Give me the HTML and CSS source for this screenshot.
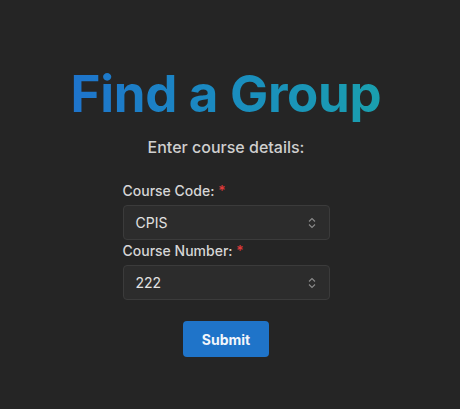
FILE: index.html
```html
<!DOCTYPE html>
<html>
<head>
<meta charset="utf-8">
<link rel="stylesheet" href="styles.css">
</head>
<body>
<main class="page">
  <h1 class="title">Find a Group</h1>
  <p class="subtitle">Enter course details:</p>
  <form class="form">
    <label class="label">Course Code: <span class="req">*</span></label>
    <div class="select"><span>CPIS</span>
      <svg class="chev" width="8" height="12" viewBox="0 0 8 12"><path d="M1 4.5 L4 1.5 L7 4.5 M1 7.5 L4 10.5 L7 7.5" fill="none" stroke="#8a8a8a" stroke-width="1.1"/></svg>
    </div>
    <label class="label">Course Number: <span class="req">*</span></label>
    <div class="select"><span>222</span>
      <svg class="chev" width="8" height="12" viewBox="0 0 8 12"><path d="M1 4.5 L4 1.5 L7 4.5 M1 7.5 L4 10.5 L7 7.5" fill="none" stroke="#8a8a8a" stroke-width="1.1"/></svg>
    </div>
    <div class="actions"><button type="button" class="btn">Submit</button></div>
  </form>
</main>
</body>
</html>
```
FILE: styles.css
```css
html, body { margin: 0; padding: 0; }
body {
  background: #252525;
  font-family: Inter, "Noto Sans", sans-serif;
  width: 460px;
  height: 409px;
  overflow: hidden;
}
.page {
  display: flex;
  flex-direction: column;
  align-items: center;
  padding: 66px 8px 0 0;
}
.title {
  margin: 0;
  font-size: 51px;
  font-weight: 700;
  line-height: 56px;
  letter-spacing: -0.3px;
  background: linear-gradient(90deg, #1e74cc 0%, #1a8cc0 50%, #1a9fae 100%);
  -webkit-background-clip: text;
  background-clip: text;
  color: transparent;
}
.subtitle {
  margin: 15px 0 0;
  font-size: 16px;
  font-weight: 500;
  color: #cfcfcf;
  line-height: 20px;
}
.form {
  width: 207px;
  margin-top: 25px;
  display: flex;
  flex-direction: column;
}
.label {
  font-size: 14px;
  font-weight: 500;
  color: #d6d6d6;
  line-height: 18px;
  margin-bottom: 5px;
}
.req { color: #e03a3a; }
.select {
  box-sizing: border-box;
  height: 35px;
  background: #2c2c2c;
  border: 1px solid #3b3b3b;
  border-radius: 4px;
  display: flex;
  align-items: center;
  justify-content: space-between;
  padding: 0 13px 0 12px;
  font-size: 14px;
  color: #e2e2e2;
  margin-bottom: 2px;
}
.actions {
  display: flex;
  justify-content: center;
  margin-top: 19px;
}
.btn {
  width: 86px;
  height: 36px;
  border: none;
  border-radius: 4px;
  background: #1f74c9;
  color: #f2f6fb;
  font-family: Inter, sans-serif;
  font-weight: 700;
  font-size: 14px;
  cursor: pointer;
}
```
